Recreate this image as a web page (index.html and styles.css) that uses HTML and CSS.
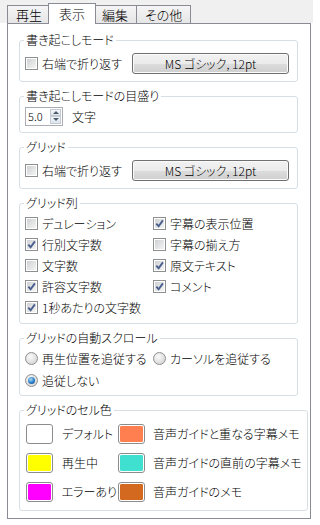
FILE: index.html
```html
<!DOCTYPE html>
<html lang="ja">
<head>
  <meta charset="UTF-8">
  <meta name="viewport" content="width=device-width, initial-scale=1.0">
  <title>表示設定</title>
  <link rel="stylesheet" href="styles.css">
</head>
<body>
  <div class="window">
    <ul class="tabs">
      <li>再生</li>
      <li class="on">表示</li>
      <li>編集</li>
      <li>その他</li>
    </ul>

    <div class="panel">
      <!-- 書き起こしモード -->
      <fieldset class="group g-wrap">
        <legend>書き起こしモード</legend>
        <div class="line">
          <label class="chk"><span class="box"></span>右端で折り返す</label>
          <span class="btn">MS ゴシック, 12pt</span>
        </div>
      </fieldset>

      <fieldset class="group g-scale">
        <legend>書き起こしモードの目盛り</legend>
        <div class="line">
          <span class="spin">
            <span class="val">5.0</span>
            <span class="arr"><i class="up"></i><i class="dn"></i></span>
          </span>
          <span class="unit">文字</span>
        </div>
      </fieldset>

      <!-- グリッド -->
      <fieldset class="group g-wrap">
        <legend>グリッド</legend>
        <div class="line">
          <label class="chk"><span class="box"></span>右端で折り返す</label>
          <span class="btn">MS ゴシック, 12pt</span>
        </div>
      </fieldset>

      <fieldset class="group g-cols">
        <legend>グリッド列</legend>
        <div class="cols">
          <label class="chk"><span class="box"></span>デュレーション</label>
          <label class="chk"><span class="box"><svg viewBox="0 0 9 9"><path d="M1.3 4.6 L3.6 7.2 L7.9 1.4"/></svg></span>字幕の表示位置</label>
          <label class="chk"><span class="box"><svg viewBox="0 0 9 9"><path d="M1.3 4.6 L3.6 7.2 L7.9 1.4"/></svg></span>行別文字数</label>
          <label class="chk"><span class="box"></span>字幕の揃え方</label>
          <label class="chk"><span class="box"></span>文字数</label>
          <label class="chk"><span class="box"><svg viewBox="0 0 9 9"><path d="M1.3 4.6 L3.6 7.2 L7.9 1.4"/></svg></span>原文テキスト</label>
          <label class="chk"><span class="box"><svg viewBox="0 0 9 9"><path d="M1.3 4.6 L3.6 7.2 L7.9 1.4"/></svg></span>許容文字数</label>
          <label class="chk"><span class="box"><svg viewBox="0 0 9 9"><path d="M1.3 4.6 L3.6 7.2 L7.9 1.4"/></svg></span>コメント</label>
          <label class="chk"><span class="box"><svg viewBox="0 0 9 9"><path d="M1.3 4.6 L3.6 7.2 L7.9 1.4"/></svg></span>1秒あたりの文字数</label>
        </div>
      </fieldset>

      <fieldset class="group g-scroll">
        <legend>グリッドの自動スクロール</legend>
        <div class="cols radios">
          <label class="chk"><span class="radio"></span>再生位置を追従する</label>
          <label class="chk"><span class="radio"></span>カーソルを追従する</label>
          <label class="chk"><span class="radio on"></span>追従しない</label>
        </div>
      </fieldset>

      <fieldset class="group g-color">
        <legend>グリッドのセル色</legend>
        <div class="swatches">
          <div class="sw"><span class="chip" style="background-color:#ffffff"></span>デフォルト</div>
          <div class="sw"><span class="chip" style="background-color:#ff7f50"></span>音声ガイドと重なる字幕メモ</div>
          <div class="sw"><span class="chip" style="background-color:#ffff00"></span>再生中</div>
          <div class="sw"><span class="chip" style="background-color:#40e0d0"></span>音声ガイドの直前の字幕メモ</div>
          <div class="sw"><span class="chip" style="background-color:#ff00ff"></span>エラーあり</div>
          <div class="sw"><span class="chip" style="background-color:#d2691e"></span>音声ガイドのメモ</div>
        </div>
      </fieldset>
    </div>
  </div>
</body>
</html>
```

FILE: styles.css
```css
* {margin:0; padding:0; box-sizing:border-box;}
body{
  background:#fff;
  color:#000;
  font-family:"Noto Sans CJK JP", "Noto Sans", sans-serif;
  font-size:12px;
  font-weight:300;
  font-feature-settings:"palt";
}

/* タブ */
.window{width:313px;}
.tabs{
  list-style:none;
  display:flex;
  align-items:flex-end;
  height:23px;
  padding-left:7px;
  background:#f0f0f0;
  font-size:13px;
}
.tabs li{
  height:18px;
  line-height:17px;
  padding:0 8px;
  margin-left:-1px;
  border:1px solid #898c95;
  border-bottom:none;
  background:linear-gradient(#f5f5f5, #e6e6e6);
}
.tabs li:first-child{margin-left:0;}
.tabs li.on{
  position:relative;
  z-index:1;
  height:21px;
  line-height:19px;
  margin:0 -2px -1px -3px;
  padding:0 10px;
  background:#fff;
}

/* パネル */
.panel{
  margin-left:7px;
  width:304px;
  border:1px solid #898c95;
  background:#fff;
  padding:9px 12px 7px 11px;
}
.group{
  border:1px solid #d5dfe5;
  border-radius:3px;
  padding:0 5px;
  margin-bottom:7px;
}
.group:last-child{margin-bottom:0;}
.group legend{
  margin-left:-1px;
  padding:0 2px;
  line-height:14px;
}
.g-wrap{padding-top:5px; padding-bottom:7px;}
.g-scale{padding-top:3px; padding-bottom:6px;}
.g-cols{padding-top:3px; padding-bottom:5px;}
.g-scroll{padding-top:2px; padding-bottom:4px;}
.g-color{padding-top:2px; padding-bottom:4px;}

.line{display:flex; align-items:center; height:22px;}
.g-scale .line{height:20px;}

/* チェックボックス・ラジオ */
.chk{display:flex; align-items:center; gap:4px; white-space:nowrap;}
.line .chk{width:107px;}
.box{
  display:flex;
  align-items:center;
  justify-content:center;
  width:13px; height:13px;
  border:1px solid #8e8f8f;
  padding:1px;
  background:linear-gradient(135deg, #cfd1d4, #f4f4f4) content-box, #fff;
}
.box svg{width:9px; height:9px;}
.box svg path{fill:none; stroke:#4a5f8e; stroke-width:1.9;}
.radio{
  display:flex;
  align-items:center;
  justify-content:center;
  width:13px; height:13px;
  border:1px solid #8e8f8f;
  border-radius:50%;
  background:radial-gradient(circle at 40% 35%, #fafafa, #d6d6d6 80%);
}
.radio.on::before{
  content:"";
  width:7px; height:7px;
  border-radius:50%;
  background:radial-gradient(circle at 40% 35%, #a9ddfa, #2a7cc7 55%, #0d3f80);
}
.cols{
  display:grid;
  grid-template-columns:128px 1fr;
  grid-auto-rows:21px;
}
.cols.radios{grid-auto-rows:22px;}

/* ボタン */
.btn{
  width:157px; height:21px;
  line-height:19px;
  text-align:center;
  border:1px solid #707070;
  border-radius:3px;
  background:linear-gradient(#f2f2f2, #ebebeb 50%, #dddddd 50%, #cfcfcf);
  box-shadow:inset 0 0 0 1px #fbfbfb;
}

/* スピン */
.spin{
  display:flex;
  width:38px; height:19px;
  border:1px solid #abadb3;
  border-top-color:#a5acb5;
}
.val{flex:1; line-height:17px; padding-left:2px; font-size:11px;}
.arr{display:flex; flex-direction:column; width:13px; padding:1px;}
.arr i{
  flex:1;
  display:flex;
  align-items:center;
  justify-content:center;
  border:1px solid #c3cad3;
  background:linear-gradient(#f5f8fb, #dde4ec);
}
.arr i::before{
  content:"";
  border-left:3px solid transparent;
  border-right:3px solid transparent;
}
.arr .up::before{border-bottom:3px solid #4d5a6e;}
.arr .dn::before{border-top:3px solid #4d5a6e;}
.unit{margin-left:9px;}

/* セル色 */
.swatches{
  display:grid;
  grid-template-columns:92px 1fr;
  grid-auto-rows:29px;
}
.sw{display:flex; align-items:center; gap:9px; white-space:nowrap;}
.sw:nth-child(even){gap:8px;}
.chip{
  width:27px; height:20px;
  margin-left:1px;
  border:1px solid #8c8c8c;
  border-radius:3px;
  padding:1px;
  background-clip:content-box;
  box-shadow:inset 0 0 0 1px #fff;
}
```
